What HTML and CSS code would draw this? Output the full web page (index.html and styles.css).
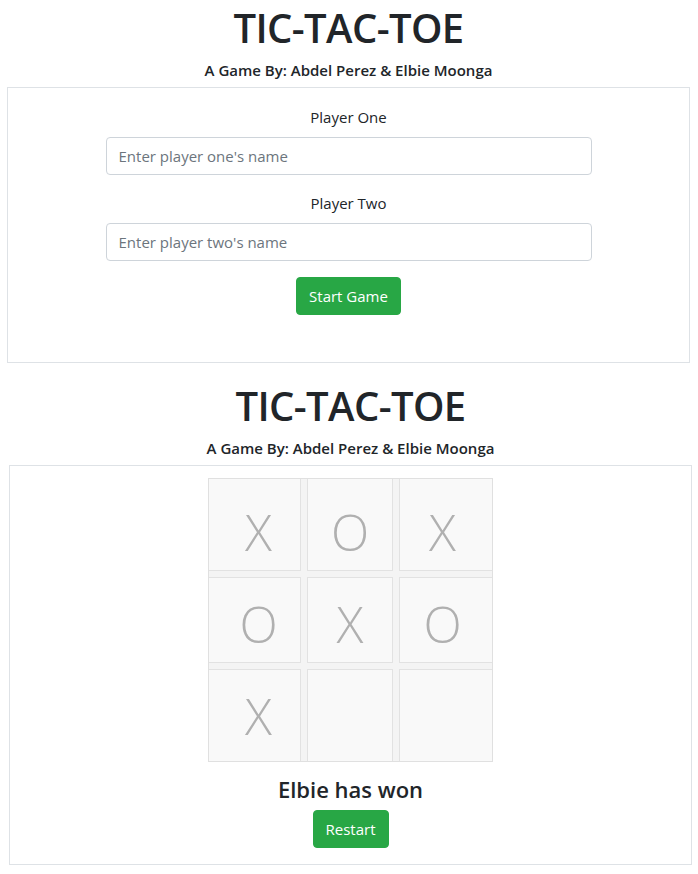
FILE: index.html
```html
<!DOCTYPE html>
<html lang="en">
<head>
<meta charset="utf-8">
<title>Tic-Tac-Toe</title>
<link rel="stylesheet" href="styles.css">
</head>
<body>
<section class="screen screen-setup">
  <h1 class="title">TIC-TAC-TOE</h1>
  <h6 class="byline">A Game By: Abdel Perez &amp; Elbie Moonga</h6>
  <div class="panel panel-setup">
    <form class="setup-form">
      <div class="field">
        <label class="field-label" for="p1">Player One</label>
        <input class="field-input" id="p1" type="text" placeholder="Enter player one's name">
      </div>
      <div class="field">
        <label class="field-label" for="p2">Player Two</label>
        <input class="field-input" id="p2" type="text" placeholder="Enter player two's name">
      </div>
      <button class="btn btn-success" type="button">Start Game</button>
    </form>
  </div>
</section>

<section class="screen screen-game">
  <h1 class="title">TIC-TAC-TOE</h1>
  <h6 class="byline">A Game By: Abdel Perez &amp; Elbie Moonga</h6>
  <div class="panel panel-game">
    <div class="board">
      <div class="cell c1 r1">X</div>
      <div class="cell c2 r1">O</div>
      <div class="cell c3 r1">X</div>
      <div class="cell c1 r2">O</div>
      <div class="cell c2 r2">X</div>
      <div class="cell c3 r2">O</div>
      <div class="cell c1 r3">X</div>
      <div class="cell c2 r3"></div>
      <div class="cell c3 r3"></div>
    </div>
    <h4 class="result">Elbie has won</h4>
    <button class="btn btn-success" type="button">Restart</button>
  </div>
</section>
</body>
</html>
```

FILE: styles.css
```css
* { box-sizing: border-box; }

body {
  margin: 0;
  font-family: "Open Sans", "Noto Sans", "Liberation Sans", sans-serif;
  font-size: 16px;
  line-height: 1.5;
  color: #212529;
  background: #fff;
}

.screen {
  display: flex;
  flex-direction: column;
  align-items: center;
}

.screen-setup { padding: 4px 8px 0 7px; }
.screen-game { padding: 19px 6px 0 9px; }

.title {
  margin: 0;
  font-size: 40px;
  font-weight: 600;
  line-height: 1.2;
  letter-spacing: -0.6px;
}

.byline {
  margin: 9px 0 8px;
  font-size: 15px;
  font-weight: 600;
  line-height: 1.2;
}

.panel {
  width: 683px;
  border: 1px solid #dee2e6;
  display: flex;
  flex-direction: column;
  align-items: center;
}

.panel-setup {
  height: 276px;
  padding-top: 17px;
}

.setup-form {
  width: 486px;
  display: flex;
  flex-direction: column;
  align-items: center;
}

.field {
  width: 100%;
  margin-bottom: 16px;
  display: flex;
  flex-direction: column;
  align-items: center;
}

.field-label {
  margin-bottom: 8px;
  line-height: 24px;
  font-size: 15px;
}

.field-input {
  width: 100%;
  height: 38px;
  padding: 6px 12px;
  font: inherit;
  font-size: 15px;
  color: #495057;
  border: 1px solid #ced4da;
  border-radius: 4px;
  background: #fff;
}

.field-input::placeholder { color: #6c757d; }

.btn {
  height: 38px;
  padding: 0 12px;
  font: inherit;
  font-size: 15px;
  border-radius: 4px;
  border: 1px solid transparent;
  cursor: pointer;
}

.btn-success {
  background: #28a745;
  border-color: #28a745;
  color: #fff;
}

.panel-game {
  padding: 12px 0 16px;
}

.board {
  display: grid;
  grid-template-columns: 93px 86px 94px;
  grid-template-rows: 93px 86px 93px;
  gap: 6px;
  background: #f4f4f4;
  outline: 1px solid #e0e0e0;
  outline-offset: -1px;
}

.cell {
  border: 1px solid #e2e2e2;
  background: #f9f9f9;
  display: flex;
  align-items: center;
  justify-content: center;
  font-size: 50px;
  font-weight: 300;
  line-height: 1;
  color: #b0b0b0;
}

.c1 { padding-left: 8px; }
.c3 { padding-right: 7px; }
.r1 { padding-top: 14px; }
.r2 { padding-top: 7px; }

.result {
  margin: 14px 0 8px;
  font-size: 22px;
  font-weight: 600;
  line-height: 1.2;
}
```
